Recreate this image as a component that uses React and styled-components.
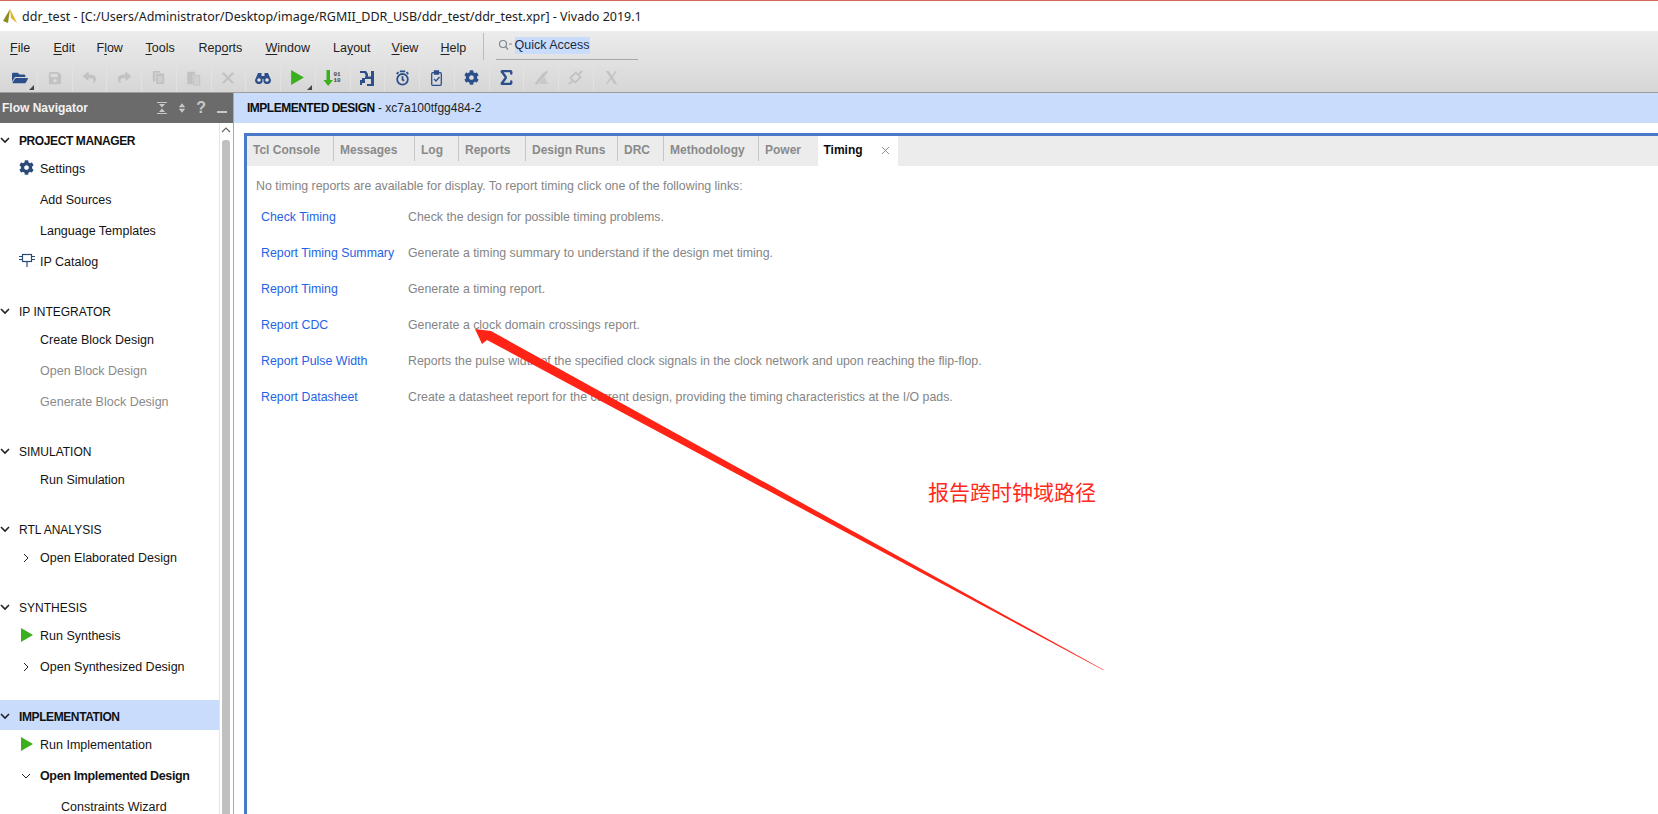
import styled, { createGlobalStyle } from "styled-components";
import { FaCog, FaReply, FaShare, FaFolderOpen, FaSave } from "react-icons/fa";
import { Sigma, X } from "lucide-react";

const BLUE = "#2c4f8a";
const OFF = "#c2c2c2";
const GREEN = "#3bb01e";

const Global = createGlobalStyle`
  html, body { margin: 0; padding: 0; height: 100%; overflow: hidden; background: #fff; }
  body { font-family: "Liberation Sans", Arial, sans-serif; }
  * { box-sizing: border-box; }
`;

const Page = styled.div`
  position: relative;
  width: 1658px;
  height: 814px;
  overflow: hidden;
  display: flex;
  flex-direction: column;
`;

const TitleBar = styled.div`
  height: 31px;
  border-top: 1px solid #d0685c;
  display: flex;
  align-items: center;
  padding-left: 2px;
  gap: 4px;
  font-family: "Noto Sans", sans-serif;
  font-size: 12.5px;
  color: #1c1c1c;
`;

const Chrome = styled.div`
  height: 62px;
  background: linear-gradient(#ececec, #d6d6d6);
  border-bottom: 1px solid #a09e9b;
  display: flex;
  flex-direction: column;
`;

const MenuRow = styled.div`
  height: 31px;
  display: flex;
  align-items: center;
  font-size: 12.5px;
  color: #222;
`;

const MenuItem = styled.span`
  width: ${(p) => p.$w}px;
  padding-left: ${(p) => p.$pad || 0}px;
  padding-top: 2px;
  u { text-underline-offset: 2px; }
`;

const MenuDivider = styled.div`
  width: 1px;
  height: 27px;
  background: #bcbcbc;
  margin-right: 12px;
`;

const QuickAccess = styled.div`
  width: 142px;
  height: 26px;
  display: flex;
  align-items: center;
  gap: 3px;
  padding: 0 0 2px 2px;
  border-bottom: 1px solid #a8a8a8;
  color: #7d8790;
  span {
    flex: none;
    white-space: nowrap;
    color: #1e2b3c;
    background: #c9dcfc;
    width: 75px;
    height: 17px;
    line-height: 16px;
    font-size: 12.5px;
  }
`;

const ToolRow = styled.div`
  height: 30px;
  display: flex;
  align-items: center;
  padding: 1px 0 0 3px;
`;

const ToolButton = styled.div`
  position: relative;
  width: 34.75px;
  height: 26px;
  display: flex;
  align-items: center;
  justify-content: center;
  color: ${(p) => (p.$off ? OFF : BLUE)};
  border-right: 1px solid #e2e2e2;
  &:last-child { border-right: 0; }
`;

const Corner = styled.i`
  position: absolute;
  right: 3px;
  bottom: 1px;
  width: 0;
  height: 0;
  border-left: 5px solid transparent;
  border-bottom: 5px solid #444;
`;

const Main = styled.div`
  flex: 1;
  display: flex;
  min-height: 0;
`;

const Side = styled.aside`
  width: 234px;
  flex: none;
  display: flex;
  flex-direction: column;
  border-right: 1px solid #a8a8a8;
`;

const SideHead = styled.div`
  height: 30px;
  flex: none;
  background: #6b6b6b;
  color: #f2f2f2;
  display: flex;
  align-items: center;
  padding-left: 2px;
  font-size: 12px;
  font-weight: 700;
`;

const SideTitle = styled.span`
  flex: 1;
`;

const HeadIcons = styled.div`
  display: flex;
  align-items: center;
  gap: 10px;
  padding-right: 5px;
  color: #c8c8c8;
  font-size: 16px;
`;

const SideBody = styled.div`
  flex: 1;
  display: flex;
  min-height: 0;
`;

const NavList = styled.nav`
  width: 219px;
  flex: none;
  padding-top: 1px;
  overflow: hidden;
`;

const Section = styled.section`
  margin-bottom: 18px;
`;

const SectionHead = styled.div`
  height: 30px;
  display: flex;
  align-items: center;
  padding: 3px 0 0 19px;
  position: relative;
  font-size: 12px;
  color: #111;
  font-weight: ${(p) => (p.$strong ? 700 : 400)};
  background: ${(p) => (p.$active ? "#c9dcfc" : "transparent")};
  letter-spacing: ${(p) => (p.$strong ? "-0.4px" : "0")};
`;

const Items = styled.div`
  margin-top: -1px;
`;

const Item = styled.div`
  height: 31px;
  display: flex;
  align-items: center;
  position: relative;
  padding-left: ${(p) => (p.$sub ? 61 : 40)}px;
  font-size: 12.5px;
  color: ${(p) => (p.$off ? "#8a8a8a" : "#141414")};
  font-weight: ${(p) => (p.$bold ? 700 : 400)};
  letter-spacing: ${(p) => (p.$bold ? "-0.35px" : "0")};
`;

const ItemIcon = styled.span`
  position: absolute;
  left: ${(p) => p.$left || 19}px;
  top: 7px;
  width: 16px;
  height: 16px;
  display: flex;
  color: #2b4a78;
`;

const Chevron = styled.svg`
  position: absolute;
  left: 0;
  top: 11px;
`;

const Scrollbar = styled.div`
  flex: 1;
  border-left: 1px solid #e4e4e4;
  display: flex;
  flex-direction: column;
  align-items: center;
  padding-right: 2px;
`;

const ScrollThumb = styled.div`
  flex: 1;
  width: 8px;
  margin-top: 6px;
  background: #c0c0c0;
  border-radius: 3px 3px 0 0;
`;

const Content = styled.main`
  flex: 1;
  min-width: 0;
  display: flex;
  flex-direction: column;
`;

const DesignBar = styled.div`
  height: 30px;
  flex: none;
  background: #c9dcfc;
  display: flex;
  align-items: center;
  padding-left: 13px;
  font-size: 12px;
  color: #222;
  white-space: pre;
  b { color: #0d0d0d; letter-spacing: -0.5px; }
`;

const Panel = styled.div`
  flex: 1;
  margin: 10px 0 0 10px;
  border-top: 3px solid #4a79c9;
  border-left: 3px solid #4a79c9;
  min-height: 0;
`;

const TabBar = styled.div`
  height: 30px;
  background: #ececec;
  display: flex;
`;

const Tab = styled.div`
  height: ${(p) => (p.$active ? 30 : 25)}px;
  width: ${(p) => p.$w}px;
  flex: none;
  display: flex;
  align-items: center;
  justify-content: space-between;
  padding: ${(p) => (p.$active ? "0 6px 2px 6px" : "3px 0 0 6px")};
  font-size: 12px;
  font-weight: 700;
  color: ${(p) => (p.$active ? "#0b0b0b" : "#8a8a8a")};
  background: ${(p) => (p.$active ? "#fff" : "transparent")};
  border-right: ${(p) => (p.$active || p.$last ? "0" : "1px solid #c6c6c6")};
`;

const Report = styled.div`
  padding: 12px 0 0 9px;
  font-size: 12.35px;
  color: #858585;
`;

const Hint = styled.div`
  height: 17px;
  line-height: 17px;
  margin-bottom: 4px;
`;

const Row = styled.div`
  height: 36px;
  display: grid;
  grid-template-columns: 147px 1fr;
  align-items: center;
  padding-left: 5px;
`;

const ReportLink = styled.a`
  color: #1f63e6;
`;

const Arrow = styled.svg`
  position: absolute;
  left: 0;
  top: 0;
  pointer-events: none;
`;

const Note = styled.div`
  position: absolute;
  left: 928px;
  top: 477px;
  font-family: "Noto Sans CJK SC", sans-serif;
  font-size: 21px;
  line-height: 28px;
  color: #ff2a1a;
`;

const Logo = () => (
  <svg width="16" height="16" viewBox="0 0 16 16">
    <path d="M8 1 L15 15 L9 10 Z" fill="#e0b21c" />
    <path d="M8 1 L1 13 L6 15 L7 8 Z" fill="#8c8a24" />
  </svg>
);

const Play = ({ size = 16 }) => (
  <svg width={size} height={size} viewBox="0 0 16 16">
    <path d="M2 1 L14 8 L2 15 Z" fill={GREEN} />
  </svg>
);

const Binoculars = () => (
  <svg width="16" height="12" viewBox="0 0 16 12" fill="currentColor">
    <path d="M3 1h3.500v3h3V1H13l3 7a4 4 0 0 1-7.500 2V7h-1v3A4 4 0 0 1 0 8z" />
    <circle cx="4" cy="8" r="1.800" fill="#e2e2e2" />
    <circle cx="12" cy="8" r="1.800" fill="#e2e2e2" />
  </svg>
);

const Copy = () => (
  <svg width="13" height="15" viewBox="0 0 16 18" fill="currentColor">
    <path d="M1 1h9v2H4v11H1z" />
    <path d="M5 4h10v13H5z" />
    <path d="M7 8h6v1H7zM7 10.500h6v1H7zM7 13h6v1H7z" fill="#e2e2e2" />
  </svg>
);

const Paste = () => (
  <svg width="15" height="16" viewBox="0 0 16 18" fill="currentColor">
    <path d="M1 2h9v3H7v11H1z" />
    <path d="M8 6h7v11H8z" fill="#d0d0d0" stroke="currentColor" />
  </svg>
);

const RunBits = () => (
  <svg width="20" height="18" viewBox="0 0 20 18">
    <path d="M3.500 1h3.500v10h3L5.200 17 .5 11h3z" fill={GREEN} />
    <text x="10.500" y="6.500" fontSize="6" fontFamily="Liberation Mono" fontWeight="700" fill="#444">01</text>
    <text x="10.500" y="12.500" fontSize="6" fontFamily="Liberation Mono" fontWeight="700" fill="#444">10</text>
  </svg>
);

const Route = () => (
  <svg width="14" height="16" viewBox="0 0 14 16" fill="currentColor">
    <path d="M0 1h6l2 3v3H5.500V5L4.500 3H0z" />
    <path d="M2 8h3v5H2v2H0V10h2z" />
    <path d="M5 6.500h6V1h3v15H7v-2h4V9H5z" />
  </svg>
);

const Stopwatch = () => (
  <svg width="15" height="16" viewBox="0 0 16 18" fill="none" stroke="currentColor" strokeWidth="2">
    <circle cx="8" cy="10.500" r="6" />
    <path d="M5 1.500h6M8 7v4l2 1M1.500 4.500l2 -2M14.500 4.500l-2 -2" />
  </svg>
);

const Clipboard = () => (
  <svg width="11" height="16" viewBox="0 0 11 16" fill="none" stroke="currentColor" strokeWidth="1.300">
    <rect x=".7" y="2.700" width="9.600" height="12.600" rx="1" />
    <path d="M3.500 1h4v3h-4z" fill="currentColor" />
    <path d="M3 9l2 2 3.500-4" />
  </svg>
);

const Flag = () => (
  <svg width="17" height="17" viewBox="0 0 18 18" fill="currentColor">
    <path d="M2 15 L10 5 L14 2 L16 3 L4 17 Z" />
    <path d="M6 16 L12 8 L16 16 Z" opacity=".7" />
  </svg>
);

const Probe = () => (
  <svg width="17" height="17" viewBox="0 0 18 18" fill="none" stroke="currentColor" strokeWidth="2">
    <path d="M2 16 L6 12 M16 2 L12 6" />
    <rect x="5.500" y="5" width="7" height="8" transform="rotate(45 9 9)" />
  </svg>
);

const Cross = () => (
  <svg width="17" height="17" viewBox="0 0 18 18" fill="currentColor">
    <path d="M3 2h3l9 14h-3z" />
    <path d="M15 3 L5 16 L3 15 L13 2Z" opacity=".8" />
  </svg>
);

const Chip = () => (
  <svg width="16" height="16" viewBox="0 0 16 16" fill="none" stroke="#2b4a78" strokeWidth="1.200">
    <rect x="3.500" y="1.500" width="9" height="7" />
    <path d="M0 3.500h3.500M0 6.500h3.500M12.500 3.500H16M12.500 6.500H16M8 8.500V14" />
  </svg>
);

const Caret = ({ open, bold, left = 0 }) => (
  <Chevron width="10" height="10" viewBox="0 0 10 10" style={{ left }}>
    <path
      d={open ? "M1 3 L5 7 L9 3" : "M3 1 L7 5 L3 9"}
      fill="none"
      stroke="#222"
      strokeWidth={bold ? 1.6 : 1}
    />
  </Chevron>
);

const menu = [
  { w: 53.500, pad: 10, el: <><u>F</u>ile</> },
  { w: 43, el: <><u>E</u>dit</> },
  { w: 49, el: <>F<u>l</u>ow</> },
  { w: 53, el: <><u>T</u>ools</> },
  { w: 67, el: <>Rep<u>o</u>rts</> },
  { w: 67.500, el: <><u>W</u>indow</> },
  { w: 58.500, el: <>La<u>y</u>out</> },
  { w: 49, el: <><u>V</u>iew</> },
  { w: 42, el: <><u>H</u>elp</> },
];

const tools = [
  { el: <FaFolderOpen size={16} />, corner: true },
  { el: <FaSave size={14} />, off: true },
  { el: <FaReply size={13} />, off: true },
  { el: <FaShare size={13} />, off: true },
  { el: <Copy />, off: true },
  { el: <Paste />, off: true },
  { el: <X size={18} strokeWidth={3} />, off: true },
  { el: <Binoculars /> },
  { el: <Play size={17} />, corner: true },
  { el: <RunBits /> },
  { el: <Route /> },
  { el: <Stopwatch /> },
  { el: <Clipboard /> },
  { el: <FaCog size={15} /> },
  { el: <Sigma size={19} strokeWidth={3} /> },
  { el: <Flag />, off: true },
  { el: <Probe />, off: true },
  { el: <Cross />, off: true },
];

const sections = [
  {
    title: "PROJECT MANAGER",
    strong: true,
    items: [
      { label: "Settings", icon: <FaCog size={15} /> },
      { label: "Add Sources" },
      { label: "Language Templates" },
      { label: "IP Catalog", icon: <Chip /> },
    ],
  },
  {
    title: "IP INTEGRATOR",
    items: [
      { label: "Create Block Design" },
      { label: "Open Block Design", off: true },
      { label: "Generate Block Design", off: true },
    ],
  },
  { title: "SIMULATION", items: [{ label: "Run Simulation" }] },
  { title: "RTL ANALYSIS", items: [{ label: "Open Elaborated Design", caret: "right" }] },
  {
    title: "SYNTHESIS",
    items: [
      { label: "Run Synthesis", icon: <Play /> },
      { label: "Open Synthesized Design", caret: "right" },
    ],
  },
  {
    title: "IMPLEMENTATION",
    strong: true,
    active: true,
    items: [
      { label: "Run Implementation", icon: <Play /> },
      { label: "Open Implemented Design", caret: "down", bold: true },
      { label: "Constraints Wizard", sub: true },
    ],
  },
];

const tabs = [
  ["Tcl Console", 87],
  ["Messages", 81],
  ["Log", 44],
  ["Reports", 67],
  ["Design Runs", 92],
  ["DRC", 46],
  ["Methodology", 95],
  ["Power", 58.500],
];

const reports = [
  ["Check Timing", "Check the design for possible timing problems."],
  ["Report Timing Summary", "Generate a timing summary to understand if the design met timing."],
  ["Report Timing", "Generate a timing report."],
  ["Report CDC", "Generate a clock domain crossings report."],
  ["Report Pulse Width", "Reports the pulse width of the specified clock signals in the clock network and upon reaching the flip-flop."],
  ["Report Datasheet", "Create a datasheet report for the current design, providing the timing characteristics at the I/O pads."],
];

export default function App() {
  return (
    <Page>
      <Global />
      <TitleBar>
        <Logo />
        ddr_test - [C:/Users/Administrator/Desktop/image/RGMII_DDR_USB/ddr_test/ddr_test.xpr] - Vivado 2019.1
      </TitleBar>
      <Chrome>
        <MenuRow>
          {menu.map((m, i) => (
            <MenuItem key={i} $w={m.w} $pad={m.pad}>
              {m.el}
            </MenuItem>
          ))}
          <MenuDivider />
          <QuickAccess>
            <svg width="14" height="12" viewBox="0 0 14 12" fill="none" stroke="currentColor" strokeWidth="1.200">
              <circle cx="5" cy="5" r="3.500" />
              <path d="M7.500 7.500 L10 10.500 M11 5h3" />
            </svg>
            <span>Quick Access</span>
          </QuickAccess>
        </MenuRow>
        <ToolRow>
          {tools.map((t, i) => (
            <ToolButton key={i} $off={t.off}>
              {t.el}
              {t.corner && <Corner />}
            </ToolButton>
          ))}
        </ToolRow>
      </Chrome>
      <Main>
        <Side>
          <SideHead>
            <SideTitle>Flow Navigator</SideTitle>
            <HeadIcons>
              <svg width="12" height="12" viewBox="0 0 12 12" fill="currentColor">
                <path d="M1 0h10v1H1zM1 11h10v1H1zM3 2h6L6 5.500zM3 10h6L6 6.500z" />
              </svg>
              <svg width="8" height="12" viewBox="0 0 10 12" fill="currentColor">
                <path d="M5 0l4 5H1zM5 12l4-5H1z" />
              </svg>
              <b>?</b>
              <svg width="12" height="12" viewBox="0 0 12 12" fill="currentColor">
                <path d="M1 9h10v2H1z" />
              </svg>
            </HeadIcons>
          </SideHead>
          <SideBody>
            <NavList>
              {sections.map((s) => (
                <Section key={s.title}>
                  <SectionHead $strong={s.strong} $active={s.active}>
                    <Caret open bold />
                    {s.title}
                  </SectionHead>
                  <Items>
                    {s.items.map((it) => (
                      <Item key={it.label} $off={it.off} $bold={it.bold} $sub={it.sub}>
                        {it.icon && <ItemIcon>{it.icon}</ItemIcon>}
                        {it.caret && <Caret left={21} open={it.caret === "down"} />}
                        {it.label}
                      </Item>
                    ))}
                  </Items>
                </Section>
              ))}
            </NavList>
            <Scrollbar>
              <svg width="10" height="8" viewBox="0 0 10 8" style={{ marginTop: 3 }}>
                <path d="M1 6 L5 2 L9 6" fill="none" stroke="#666" strokeWidth="1.200" />
              </svg>
              <ScrollThumb />
            </Scrollbar>
          </SideBody>
        </Side>
        <Content>
          <DesignBar>
            <b>IMPLEMENTED DESIGN</b> - xc7a100tfgg484-2
          </DesignBar>
          <Panel>
            <TabBar>
              {tabs.map(([name, w], i) => (
                <Tab key={name} $w={w} $last={i === tabs.length - 1}>
                  {name}
                </Tab>
              ))}
              <Tab $active $w={80.500}>
                Timing
                <X size={13} color="#777" strokeWidth={1.500} />
              </Tab>
            </TabBar>
            <Report>
              <Hint>No timing reports are available for display. To report timing click one of the following links:</Hint>
              {reports.map(([name, text]) => (
                <Row key={name}>
                  <ReportLink>{name}</ReportLink>
                  <span>{text}</span>
                </Row>
              ))}
            </Report>
          </Panel>
        </Content>
      </Main>
      <Arrow width="1658" height="814" viewBox="0 0 1658 814">
        <path d="M475 329 L491 331 L1104 670 L1103 670 L487 340 L482 344 Z" fill="#ff2415" />
      </Arrow>
      <Note>报告跨时钟域路径</Note>
    </Page>
  );
}
